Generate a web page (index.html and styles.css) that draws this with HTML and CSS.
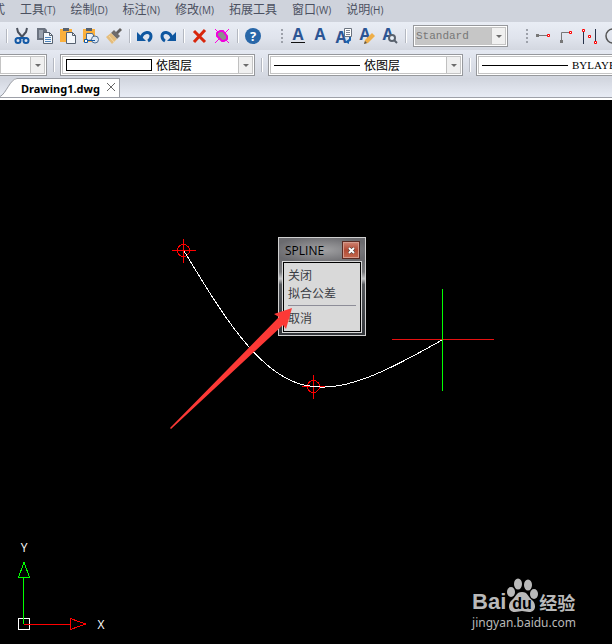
FILE: index.html
```html
<!DOCTYPE html>
<html lang="zh-CN">
    <head>
        <meta charset="utf-8"/>
        <title>Drawing1.dwg</title>
        <link rel="stylesheet" href="styles.css">
    </head>

    <body>
        <!-- menu bar -->
        <nav class="menubar">
            <button class="menu menu-cut">式</button>
            <button class="menu">工具<span>(T)</span></button>
            <button class="menu">绘制<span>(D)</span></button>
            <button class="menu">标注<span>(N)</span></button>
            <button class="menu">修改<span>(M)</span></button>
            <button class="menu">拓展工具</button>
            <button class="menu">窗口<span>(W)</span></button>
            <button class="menu">说明<span>(H)</span></button>
        </nav>

        <!-- standard, text and dimension toolbars -->
        <div class="tools">
            <div class="toolbar edit">
                <i class="sep"></i>
                <button class="tool" aria-label="剪切">
                    <svg width="16" height="16" viewBox="0 0 16 16"><path d="M3 0l1 4 5 6M13 0l-1 4-5 6" stroke="#4a505c" stroke-width="2" fill="none"/><circle cx="4" cy="12.500" r="2.500" stroke="#1258a5" stroke-width="2" fill="none"/><circle cx="12" cy="12.500" r="2.500" stroke="#1258a5" stroke-width="2" fill="none"/><path d="M5 10h6" stroke="#1258a5" stroke-width="2"/></svg>
                </button>
                <button class="tool" aria-label="复制">
                    <svg width="16" height="16" viewBox="0 0 16 16"><path d="M0 0h8l2 2v10H0z" fill="#6b7380"/><path d="M2 3h4M2 5h4M2 7h4M2 9h4" stroke="#c9d1dc"/><path d="M6.500 4.500h6l3 3v8h-9z" fill="#f4f7fb" stroke="#56616f"/><path d="M12.500 4.500v3h3" fill="none" stroke="#56616f"/><path d="M8 9.500h6M8 11.500h6M8 13.500h6" stroke="#4a83bd"/></svg>
                </button>
                <button class="tool" aria-label="粘贴">
                    <svg width="16" height="16" viewBox="0 0 16 16"><path d="M0 1h12v13H0z" fill="#fbb03c"/><path d="M3 0h6v3H3z" fill="#566170"/><path d="M6.500 4.500h6l3 3v8h-9z" fill="#f4f7fb" stroke="#56616f"/><path d="M12.500 4.500v3h3" fill="none" stroke="#56616f"/></svg>
                </button>
                <button class="tool" aria-label="粘贴为块">
                    <svg width="16" height="16" viewBox="0 0 16 16"><path d="M0 1h12v13H0z" fill="#fbb03c"/><path d="M3 0h6v3H3z" fill="#566170"/><path d="M3.500 12.500V5.500h6l3 6z" fill="#eaf1fa" stroke="#4c6b8e"/><circle cx="12" cy="11.500" r="3.500" fill="#dce7f4" stroke="#4c6b8e"/><path d="M3 12.500h9" stroke="#1258a5"/><path d="M1.500 11.500h3v3h-3z" fill="#fff" stroke="#1258a5"/></svg>
                </button>
                <button class="tool" aria-label="特性匹配">
                    <svg width="16" height="16" viewBox="0 0 16 16"><path d="M14 0l2 2-5 5-2-2z" fill="#63605f"/><path d="M8 2l6 6-3 3-6-6z" fill="#6f6c6b"/><path d="M5 5l6 6-5 5-6-7z" fill="#e5bd7c"/><path d="M3 8l5 6" stroke="#f5d9a5"/></svg>
                </button>
                <i class="sep"></i>
                <button class="tool" aria-label="放弃">
                    <svg width="16" height="16" viewBox="0 0 16 16"><path d="M4 10C6 3 14 3 14 8c0 3-1 4-3 5" fill="none" stroke="#0f57a0" stroke-width="3"/><path d="M0 4v9h9z" fill="#0f57a0"/></svg>
                </button>
                <button class="tool" aria-label="重做">
                    <svg width="16" height="16" viewBox="0 0 16 16"><path d="M12 10C10 3 2 3 2 8c0 3 1 4 3 5" fill="none" stroke="#0f57a0" stroke-width="3"/><path d="M16 4v9H7z" fill="#0f57a0"/></svg>
                </button>
                <i class="sep"></i>
                <button class="tool" aria-label="删除">
                    <svg width="16" height="16" viewBox="0 0 16 16"><path d="M3 3l11 11M14 2L3 14" stroke="#d8260c" stroke-width="3"/></svg>
                </button>
                <button class="tool" aria-label="清理">
                    <svg width="16" height="16" viewBox="0 0 16 16"><path d="M1 1l4 4M11 11l4 4M15 1l-4 4M5 11l-4 4" stroke="#ff00e0"/><path d="M3 5l3-2h3l4 5v3l-3 2H8L3 8z" fill="#8d8d8d" stroke="#f000dc" stroke-width="2"/></svg>
                </button>
                <i class="sep"></i>
                <button class="tool" aria-label="帮助">
                    <svg width="16" height="16" viewBox="0 0 16 16"><circle cx="8" cy="8" r="8" fill="#2967a8"/><text x="8" y="13" class="help-mark">?</text></svg>
                </button>
            </div>
            <div class="toolbar style">
                <i class="grip"></i>
                <button class="tool" aria-label="多行文字">
                    <svg width="16" height="16" viewBox="0 0 16 16"><text x="8" y="12" class="letter">A</text><path d="M1 14.500h14" stroke="#111"/></svg>
                </button>
                <button class="tool" aria-label="单行文字">
                    <svg width="16" height="16" viewBox="0 0 16 16"><text x="7" y="12" class="letter">A</text></svg>
                </button>
                <button class="tool" aria-label="编辑文字">
                    <svg width="16" height="16" viewBox="0 0 16 16"><path d="M8.500 .500h7v8h-7z" fill="#fff" stroke="#6c7480"/><path d="M10 2.500h4M10 4.500h4M10 6.500h4" stroke="#7e8794"/><text x="5" y="15" class="letter">A</text><path d="M14 9v3l-3 2" fill="none" stroke="#1b62ae" stroke-width="2"/><path d="M9 14l4-3v5z" fill="#1b62ae"/></svg>
                </button>
                <button class="tool" aria-label="修改文字">
                    <svg width="16" height="16" viewBox="0 0 16 16"><text x="6" y="12" class="letter">A</text><path d="M13 5l3 3-7 7-4 1 1-4z" fill="#eeae48"/><path d="M5 16l1-3 2 2z" fill="#555"/></svg>
                </button>
                <button class="tool" aria-label="查找文字">
                    <svg width="16" height="16" viewBox="0 0 16 16"><text x="6" y="12" class="letter">A</text><circle cx="10" cy="10" r="3" fill="#e9f0f8" stroke="#59616d" stroke-width="2"/><path d="M12 12l3 3" stroke="#59616d" stroke-width="2"/></svg>
                </button>
                <i class="sep"></i>
                <span class="combo combo-style">
                    <select aria-label="文字样式" disabled><option>Standard</option></select>
                </span>
            </div>
            <div class="toolbar dim">
                <i class="grip"></i>
                <button class="tool" aria-label="线性标注">
                    <svg width="16" height="16" viewBox="0 0 16 16"><path d="M2 7.500h10" stroke="#777"/><path d="M1 6h3v3H1z" fill="#777"/><path d="M12.500 6.500h2v2h-2z" fill="#fff" stroke="#f00"/></svg>
                </button>
                <button class="tool" aria-label="坐标标注">
                    <svg width="16" height="16" viewBox="0 0 16 16"><path d="M3.500 13V4.500H12" fill="none" stroke="#777"/><path d="M2 12h3v3H2z" fill="#777"/><path d="M11.500 3.500h2v2h-2z" fill="#fff" stroke="#f00"/></svg>
                </button>
                <button class="tool" aria-label="对齐标注">
                    <svg width="16" height="16" viewBox="0 0 16 16"><path d="M2.500 3v13M14.500 1v13" stroke="#26324a"/><path d="M1.500 1.500h2v2h-2zM7.500 7.500h2v2h-2zM13.500 13.500h2v2h-2z" fill="#fff" stroke="#f00"/></svg>
                </button>
                <button class="tool" aria-label="半径标注">
                    <svg width="16" height="16" viewBox="0 0 16 16"><circle cx="9" cy="8" r="7" fill="none" stroke="#555" stroke-width="1.500"/></svg>
                </button>
            </div>
        </div>

        <!-- object properties -->
        <div class="props">
            <span class="combo combo-layer"><select aria-label="图层"><option></option></select></span>
            <i class="sep"></i>
            <span class="combo combo-wide"><i class="swatch box"></i><select aria-label="颜色"><option>依图层</option></select></span>
            <i class="sep"></i>
            <span class="combo combo-wide"><i class="swatch line"></i><select aria-label="线型"><option>依图层</option></select></span>
            <i class="sep"></i>
            <span class="combo combo-wide"><i class="swatch line"></i><select aria-label="线宽" class="latin"><option>BYLAYER</option></select></span>
        </div>

        <!-- document tabs -->
        <div class="tabs">
            <svg class="tab-slope" width="17" height="19" viewBox="0 0 17 19"><path d="M0 19C6 17 10 1 17 0v19z" fill="#fff"/><path d="M0 18.500C6 16 10 1 17 .500" fill="none" stroke="#9a9da4"/></svg>
            <div class="tab">
                <span>Drawing1.dwg</span>
                <button class="tab-close" aria-label="关闭图形">
                    <svg width="8" height="8" viewBox="0 0 8 8"><path d="M0 0l8 8M8 0L0 8" stroke="#666"/></svg>
                </button>
            </div>
        </div>

        <!-- model space -->
        <main class="canvas">
            <svg class="drawing" width="500" height="300" viewBox="0 0 500 300">
                <g fill="none" shape-rendering="crispEdges">
                    <path d="M172 150.500h24M183.500 139v24M302 286.500h24M313.500 275v24" stroke="#f00"/>
                    <circle cx="183.500" cy="150.500" r="6" stroke="#f00"/>
                    <circle cx="313.500" cy="286.500" r="6" stroke="#f00"/>
                    <path d="M392 239.500h102" stroke="#e61010"/>
                    <path d="M442.500 189v102" stroke="#0f0"/>
                    <path d="M184 151C220 210 262 284 314 286.500C346 291 386 272 442 240" stroke="#fff"/>
                </g>
            </svg>

            <section class="dialog">
                <header>
                    <h2>SPLINE</h2>
                    <button class="dialog-close" aria-label="关闭">
                        <svg width="7" height="7" viewBox="0 0 7 7"><path d="M1 1l5 5M6 1L1 6" stroke="#333" stroke-width="3"/><path d="M1 1l5 5M6 1L1 6" stroke="#fff" stroke-width="2"/></svg>
                    </button>
                </header>
                <div class="options">
                    <button>关闭</button>
                    <button>拟合公差</button>
                    <hr>
                    <button>取消</button>
                </div>
            </section>

            <svg class="pointer" width="124" height="122" viewBox="0 0 124 122"><path d="M123 1L105 7l5 3L1 121l1 1L114 18l3 4z" fill="#fc3936"/></svg>

            <svg class="ucs" width="120" height="110" viewBox="0 0 120 110">
                <g fill="none" shape-rendering="crispEdges">
                    <path d="M18.500 84.500h11v11h-11z" stroke="#fff"/>
                    <path d="M24 90.500h46M70.500 84.500v11l15-5.500z" stroke="#f00"/>
                    <path d="M23.500 90V43M18.500 43.500h11L24 28z" stroke="#0f0"/>
                </g>
                <text x="24" y="18">Y</text>
                <text x="101" y="95">X</text>
            </svg>

            <div class="watermark">
                <div class="brand">
                    <span class="bai">Bai</span>
                    <svg width="33" height="36" viewBox="0 0 33 36"><g fill="#b9b9b9"><ellipse cx="5" cy="14" rx="4" ry="5"/><ellipse cx="12" cy="6" rx="4" ry="5.500"/><ellipse cx="22" cy="7" rx="4" ry="5.500"/><ellipse cx="28" cy="16" rx="4" ry="5"/><path d="M16 14c6 0 6 5 10 8s5 12-3 12c-3 0-5-1-7-1s-4 1-7 1c-8 0-7-9-3-12s4-8 10-8z"/></g><text x="16" y="31">du</text></svg>
                    <span class="jingyan">经验</span>
                </div>
                <a href="#">jingyan.baidu.com</a>
            </div>
        </main>
    </body>
</html>
```
FILE: styles.css
```css
* {
    box-sizing: border-box;
}

body {
    margin: 0;
    min-height: 100vh;
    display: flex;
    flex-direction: column;
    background-color: #cfd3dc;
    font-family: "Open Sans", "Noto Sans CJK SC", sans-serif;
    font-size: 12px;
    overflow-x: hidden;
}

button {
    padding: 0;
    border: none;
    background: none;
    font: inherit;
    color: inherit;
    flex: none;
}

svg {
    display: block;
    overflow: visible;
}

/* menu bar */
.menubar {
    display: flex;
    gap: 15px;
    height: 22px;
    overflow: hidden;
    color: #4b5060;
}

.menu {
    height: 20px;
    line-height: 20px;
    white-space: nowrap;
}

.menu span {
    font-size: 10px;
}

.menu-cut {
    margin-left: -7px;
}

/* icon toolbars */
.tools {
    display: flex;
    height: 28px;
    overflow: hidden;
}

.toolbar {
    display: flex;
    align-items: center;
    flex: none;
    background: linear-gradient(#e9edf5, #dfe3ec 60%, #d3d7e0);
}

.edit {
    gap: 7px;
    width: 276px;
    padding-left: 6px;
}

.style {
    gap: 7px;
    width: 246px;
    padding-left: 5px;
}

.dim {
    gap: 7px;
    flex: 1 0 auto;
    padding-left: 4px;
}

.tool {
    width: 16px;
    height: 16px;
}

.sep {
    flex: none;
    width: 2px;
    height: 14px;
    margin-right: -1px;
    background: linear-gradient(90deg, #b4b8c1 50%, #fff 50%);
}

.grip {
    flex: none;
    width: 2px;
    height: 14px;
    background: repeating-linear-gradient(#9da1aa 0 2px, transparent 2px 4px);
}

.help-mark {
    font: bold 13px "Open Sans", sans-serif;
    text-anchor: middle;
    fill: #fff;
}

.letter {
    font: bold 16px "Open Sans", sans-serif;
    text-anchor: middle;
    fill: #2b5594;
}

/* drop-downs */
.combo {
    position: relative;
    flex: none;
    height: 22px;
    padding: 1px;
    border: 1px solid #96989c;
    background-color: #fff;
}

.combo::after {
    content: "";
    position: absolute;
    top: 9px;
    right: 5px;
    border: 3px solid transparent;
    border-top-color: #6c6c6c;
    border-bottom: none;
    pointer-events: none;
}

.combo select {
    appearance: none;
    display: block;
    width: 100%;
    height: 18px;
    padding: 0 0 0 93px;
    border: 1px solid #c4c4c4;
    border-radius: 0;
    background: linear-gradient(90deg, #c0c0c0 1px, #f0f0f0 1px) right / 14px 100% no-repeat #fff;
    font: 12px "Noto Sans CJK SC", sans-serif;
    line-height: 16px;
    color: #000;
    opacity: 1;
}

.combo .latin {
    font-family: "Liberation Serif", serif;
    font-size: 11px;
}

.combo-style {
    width: 95px;
}

.combo-style select {
    padding-left: 0;
    background-color: #c6c6c6;
    font-family: "Liberation Mono", monospace;
    font-size: 11px;
    color: #777;
}

.combo-layer {
    width: 49px;
    margin-left: -2px;
}

.combo-layer select {
    padding-left: 0;
}

.combo-wide {
    width: 195px;
}

.swatch {
    position: absolute;
    left: 5px;
    width: 86px;
}

.box {
    top: 4px;
    height: 12px;
    border: 1px solid #000;
}

.line {
    top: 10px;
    height: 1px;
    background-color: #000;
}

/* properties row */
.props {
    display: flex;
    align-items: center;
    gap: 6px;
    height: 28px;
    padding-top: 2px;
    overflow: hidden;
    background: linear-gradient(#e5e9f2, #d3d7e0);
}

/* tabs */
.tabs {
    display: flex;
    align-items: flex-end;
    height: 20px;
    border-bottom: 1px solid #9da0a8;
    background: linear-gradient(#d1d5de, #e8ecf5);
}

.tab {
    display: flex;
    align-items: center;
    gap: 7px;
    height: 19px;
    padding: 0 4px;
    border: 1px solid #9a9da4;
    border-width: 1px 1px 0 0;
    background-color: #fff;
    font-family: "Noto Sans", sans-serif;
    font-size: 11px;
    font-weight: bold;
}

.tab-close {
    margin-bottom: 2px;
}

/* model space */
.canvas {
    position: relative;
    flex: 1;
    min-height: 546px;
    border-top: 2px solid #fff;
    background-color: #000;
    overflow: hidden;
}

.drawing {
    position: absolute;
    top: 0;
    left: 0;
}

.dialog {
    position: absolute;
    top: 137px;
    left: 278px;
    width: 88px;
    padding: 0 4px 3px;
    border: 1px solid #d0d0d0;
    background: linear-gradient(#55565a, #77787b 35%, #c4c5c7 42%, #55585c 48%, #33363a);
    color: #3a3c44;
}

.dialog header {
    display: flex;
    align-items: center;
    justify-content: space-between;
    height: 24px;
    margin: 0 -4px;
    padding: 0 5px 0 6px;
    background: radial-gradient(#a2a2a4, #6a6a6e 80%);
}

.dialog h2 {
    margin: 0;
    font-size: 12px;
    font-weight: normal;
    color: #000;
}

.dialog-close {
    display: flex;
    align-items: center;
    justify-content: center;
    width: 18px;
    height: 18px;
    border: 1px solid #5a2a22;
    box-shadow: inset 0 0 0 1px #d59a8c;
    background: linear-gradient(#cf8473, #b04a35 50%, #c4694f);
}

.options {
    padding: 4px 4px 3px;
    border: 1px solid #000;
    outline: 1px solid #d8d8d8;
    background-color: #d9d9d9;
}

.options button {
    display: block;
    height: 18px;
    line-height: 18px;
    white-space: nowrap;
}

.options hr {
    height: 1px;
    margin: 2px 0 4px;
    border: none;
    background-color: #8d8d98;
}

.pointer {
    position: absolute;
    top: 207px;
    left: 169px;
}

.ucs {
    position: absolute;
    bottom: 0;
    left: 0;
}

.ucs text {
    font: 12px "Open Sans", sans-serif;
    text-anchor: middle;
    fill: #fff;
}

.watermark {
    position: absolute;
    right: 36px;
    bottom: 12px;
    color: #b9b9b9;
}

.watermark a {
    display: block;
    font-family: "Noto Sans", sans-serif;
    font-size: 12px;
    line-height: 18px;
    color: inherit;
    text-decoration: none;
}

.brand {
    display: flex;
    align-items: flex-end;
    height: 36px;
}

.bai {
    font: bold 22px "Liberation Sans", sans-serif;
    line-height: 24px;
}

.brand text {
    font: bold 16px "Liberation Sans", sans-serif;
    text-anchor: middle;
    fill: #000;
}

.jingyan {
    font-size: 18px;
    font-weight: bold;
    line-height: 22px;
}
```
